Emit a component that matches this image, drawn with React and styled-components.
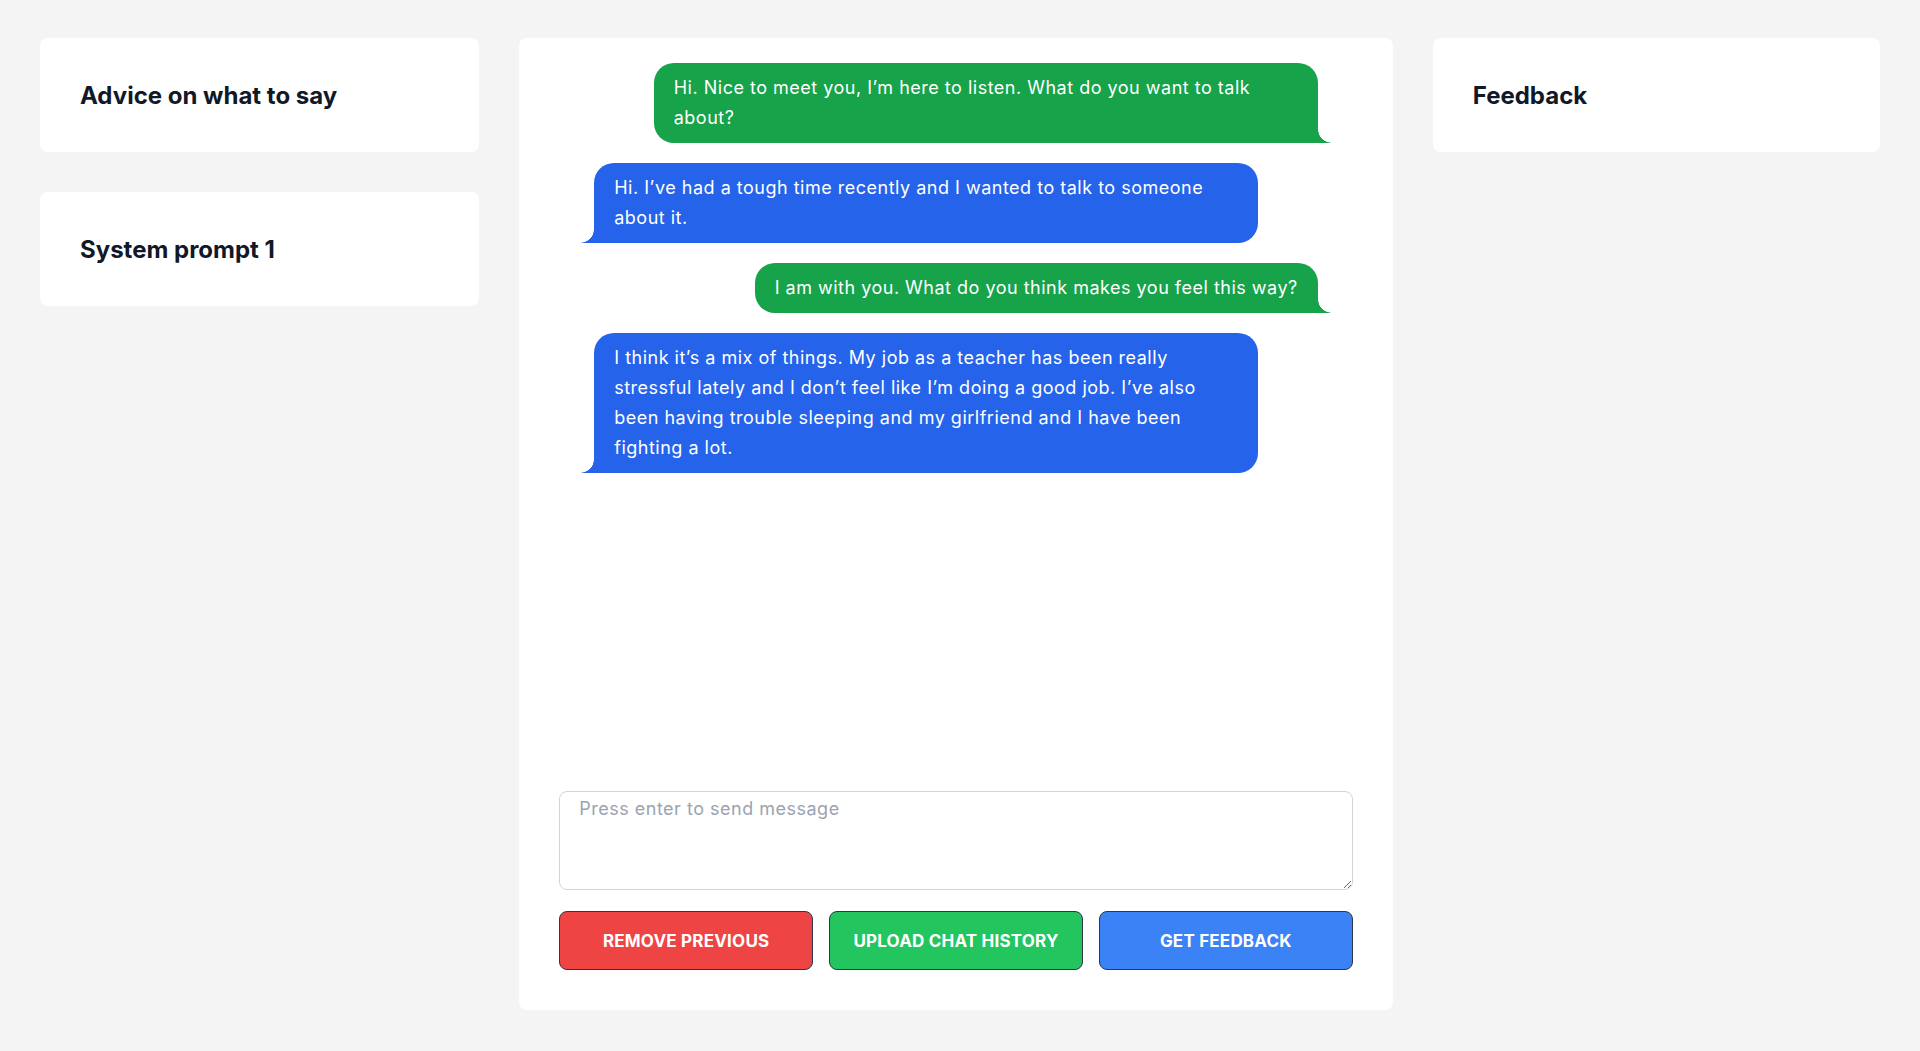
import styled, { createGlobalStyle } from "styled-components";

const GlobalStyle = createGlobalStyle`
    * {
        box-sizing: border-box;
    }

    body {
        margin: 0;
        background: #f4f4f4;
        font-family: Inter, "Noto Sans", "Liberation Sans", sans-serif;
        color: #111827;
    }
`

const Page = styled.div`
    display: grid;
    grid-template-columns: 439fr 873fr 447fr;
    column-gap: 40px;
    height: 100vh;
    padding: 38px 40px 41px;
`

const SideColumn = styled.div`
    display: flex;
    flex-direction: column;
    gap: 40px;
    align-self: start;
`

const Card = styled.div`
    background: #ffffff;
    border-radius: 8px;
    padding: 41px 40px 39px;
`

const CardTitle = styled.h2`
    margin: 0;
    font-size: 24px;
    line-height: 34px;
    font-weight: 700;
    color: #111827;
`

const ChatCard = styled.div`
    display: flex;
    flex-direction: column;
    background: #ffffff;
    border-radius: 8px;
    padding: 25px 40px 40px;
    min-height: 0;
`

const ChatList = styled.div`
    flex: 1;
    display: flex;
    flex-direction: column;
    gap: 20px;
    padding: 0 35px;
    overflow: hidden;
`

const Bubble = styled.div`
    position: relative;
    max-width: 664px;
    padding: 10px 20px;
    font-size: 18px;
    line-height: 30px;
    letter-spacing: 0.5px;
    color: #ffffff;
    border-radius: 20px;
    align-self: ${(p) => (p.$mine ? "flex-end" : "flex-start")};
    background: ${(p) => (p.$mine ? "#16a34a" : "#2563eb")};
    ${(p) => (p.$mine ? "border-bottom-right-radius: 0;" : "border-bottom-left-radius: 0;")}

    &::after {
        content: "";
        position: absolute;
        bottom: 0;
        width: 14px;
        height: 13px;
        ${(p) => (p.$mine ? "right: -14px;" : "left: -14px;")}
        background: ${(p) =>
            p.$mine
                ? "radial-gradient(14px 13px at 100% 0, transparent 96%, #16a34a 100%)"
                : "radial-gradient(14px 13px at 0 0, transparent 96%, #2563eb 100%)"};
    }
`

const MessageInput = styled.textarea`
    display: block;
    width: 100%;
    height: 99px;
    margin-top: 20px;
    padding: 3px 19px;
    border: 1px solid #d1d5db;
    border-radius: 8px;
    font-family: Inter, "Noto Sans", sans-serif;
    font-size: 18px;
    line-height: 27px;
    letter-spacing: 0.5px;
    color: #111827;
    resize: vertical;
    outline: none;

    &::placeholder {
        color: #9ca3af;
    }
`

const ButtonRow = styled.div`
    display: grid;
    grid-template-columns: repeat(3, 1fr);
    gap: 16px;
    margin-top: 21px;
`

const ActionButton = styled.button`
    height: 59px;
    border: 1px solid #2d3748;
    border-radius: 8px;
    background: ${(p) => p.$color};
    color: #ffffff;
    font-family: Inter, "Noto Sans", sans-serif;
    font-size: 17px;
    font-weight: 700;
    letter-spacing: 0.2px;
    text-transform: uppercase;
    cursor: pointer;
`

const messages = [
    { mine: true, text: "Hi. Nice to meet you, I\u2019m here to listen. What do you want to talk about?" },
    { mine: false, text: "Hi. I\u2019ve had a tough time recently and I wanted to talk to someone about it." },
    { mine: true, text: "I am with you. What do you think makes you feel this way?" },
    {
        mine: false,
        text: "I think it\u2019s a mix of things. My job as a teacher has been really stressful lately and I don\u2019t feel like I\u2019m doing a good job. I\u2019ve also been having trouble sleeping and my girlfriend and I have been fighting a lot.",
    },
]

function App() {
    return (
        <>
            <GlobalStyle />
            <Page>
                <SideColumn>
                    <Card>
                        <CardTitle>Advice on what to say</CardTitle>
                    </Card>
                    <Card>
                        <CardTitle>System prompt 1</CardTitle>
                    </Card>
                </SideColumn>

                <ChatCard>
                    <ChatList>
                        {messages.map((m, i) => (
                            <Bubble key={i} $mine={m.mine}>{m.text}</Bubble>
                        ))}
                    </ChatList>
                    <MessageInput placeholder="Press enter to send message" />
                    <ButtonRow>
                        <ActionButton $color="#ef4444">Remove previous</ActionButton>
                        <ActionButton $color="#22c55e">Upload chat history</ActionButton>
                        <ActionButton $color="#3b82f6">Get feedback</ActionButton>
                    </ButtonRow>
                </ChatCard>

                <SideColumn>
                    <Card>
                        <CardTitle>Feedback</CardTitle>
                    </Card>
                </SideColumn>
            </Page>
        </>
    )
}

export default App;
